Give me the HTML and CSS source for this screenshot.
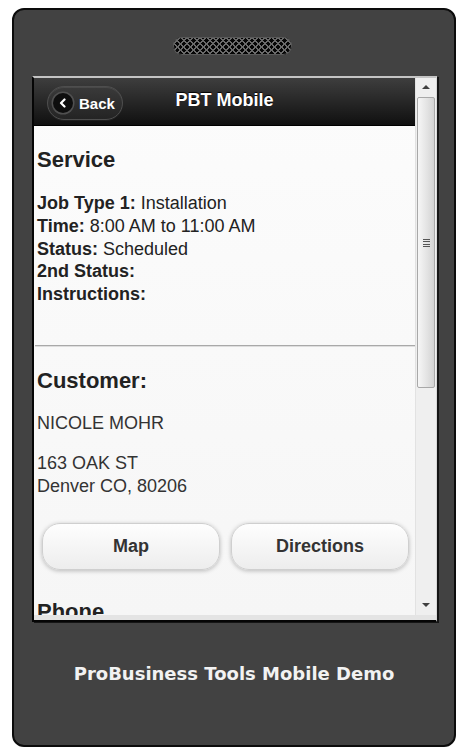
FILE: index.html
```html
<!DOCTYPE html>
<html lang="en">
<head>
    <meta charset="UTF-8">
    <meta name="viewport" content="width=device-width, initial-scale=1.0">
    <title>ProBusiness Tools Mobile Demo</title>
    <link rel="stylesheet" href="styles.css">
</head>
<body>
    <div class="phone">
        <div class="grille"></div>

        <div class="screen">
            <div class="view">
                <div class="header">
                    <a href="#" class="back">
                        <span class="back-icon">
                            <svg width="10" height="10" viewBox="0 0 10 10"><path d="M6.5 1.5 L3 5 L6.5 8.5" fill="none" stroke="#fff" stroke-width="2.2" stroke-linecap="round" stroke-linejoin="round"/></svg>
                        </span>
                        Back
                    </a>
                    <h1>PBT Mobile</h1>
                </div>

                <div class="content">
                    <h3 class="first">Service</h3>
                    <p class="details">
                        <b>Job Type 1:</b> Installation<br>
                        <b>Time:</b> 8:00 AM to 11:00 AM<br>
                        <b>Status:</b> Scheduled<br>
                        <b>2nd Status:</b><br>
                        <b>Instructions:</b>
                    </p>
                    <hr>
                    <h3>Customer:</h3>
                    <p class="name">NICOLE MOHR</p>
                    <p class="address">163 OAK ST<br>Denver CO, 80206</p>
                    <div class="actions">
                        <a href="#" class="btn">Map</a>
                        <a href="#" class="btn">Directions</a>
                    </div>
                    <h3 class="phone-title">Phone</h3>
                </div>
            </div>

            <div class="scrollbar">
                <div class="arrow up"></div>
                <div class="thumb"><span class="grip"></span></div>
                <div class="track"></div>
                <div class="arrow down"></div>
            </div>
        </div>

        <div class="caption">ProBusiness Tools Mobile Demo</div>
    </div>
</body>
</html>
```

FILE: styles.css
```css
body {margin: 0; background: #fff; font-family: "Liberation Sans", Arial, sans-serif;}

.phone {box-sizing: border-box; width: 444px; height: 739px; margin: 8px 0 0 12px; padding-top: 27px; background: #424242; border: 2px solid #0c0c0c; border-radius: 12px;}

.grille {width: 119px; height: 18px; margin-left: 159px; border-radius: 9px; background-color: #050505;
    background-image: repeating-linear-gradient(45deg, transparent 0 3.4px, #6a6a6a 3.4px 4.6px), repeating-linear-gradient(-45deg, transparent 0 3.4px, #6a6a6a 3.4px 4.6px);
    box-shadow: inset 0 0 0 1px #5a5a5a;}

.screen {box-sizing: border-box; display: flex; width: 405px; height: 546px; margin: 21px 0 0 18px; padding-bottom: 5px; background: #e4e4e4; border-top: 2px solid #c4c4c4; border-right: 1px solid #d8d8d8; border-left: 2px solid #050505; border-bottom: 2px solid #050505; box-shadow: 2px 1px 0 #151515;}

.view {flex: 1; overflow: hidden; background: linear-gradient(#fcfcfc, #f6f6f6); color: #222;}

.header {position: relative; height: 48px; background: linear-gradient(#3e3e3e, #101010); border-bottom: 1px solid #000; box-sizing: border-box;}
.header h1 {margin: 0; text-align: center; font-size: 18px; line-height: 44px; color: #fff; text-shadow: 0 -1px 1px #000;}

.back {position: absolute; left: 13px; top: 8px; box-sizing: border-box; width: 76px; height: 34px; display: flex; align-items: center; gap: 6px; padding-left: 5px; border: 1px solid #4e4e4e; border-radius: 17px; background: linear-gradient(#3a3a3a, #242424); box-shadow: inset 0 1px 0 rgba(255,255,255,0.08), 0 1px 0 rgba(255,255,255,0.05); color: #fff; font-size: 15px; font-weight: bold; text-decoration: none;}
.back-icon {display: flex; align-items: center; justify-content: center; width: 20px; height: 20px; border-radius: 50%; background: #0e0e0e; box-shadow: 0 0 0 1.5px #505050;}

.content {padding-left: 3px;}
.content h3 {margin: 21px 0 0; font-size: 22px; line-height: 26px;}
.details {margin: 19px 0 0; font-size: 18px; line-height: 22.75px;}
.content hr {margin: 39px 0 0 -2px; border: 0; border-top: 1px solid #a9a9a9; border-bottom: 1px solid #dedede;}
.name {margin: 18.5px 0 0; font-size: 18px; line-height: 22.75px; color: #333;}
.address {margin: 17.3px 0 0; font-size: 18px; line-height: 22.75px; color: #333;}

.actions {display: grid; grid-template-columns: 1fr 1fr; gap: 11px; margin-top: 25px; padding: 0 6px 0 5px;}
.btn {display: block; height: 47px; box-sizing: border-box; line-height: 45px; text-align: center; border: 1px solid #cfcfcf; border-radius: 18px; background: linear-gradient(#fefefe, #ededed); box-shadow: 0 1px 4px rgba(0,0,0,0.25); color: #333; font-size: 18px; font-weight: bold; text-decoration: none;}

.content h3.phone-title {margin-top: 29px;}

.scrollbar {display: flex; flex-direction: column; width: 20px; background: #efefef; border-left: 1px solid #e2e2e2;}
.arrow {height: 19px; position: relative;}
.arrow::after {content: ""; position: absolute; left: 6px; top: 7px; border-left: 4px solid transparent; border-right: 4px solid transparent;}
.arrow.up::after {border-bottom: 4px solid #404040;}
.arrow.down::after {border-top: 4px solid #404040;}
.thumb {display: flex; align-items: center; justify-content: center; height: 291px; margin: 0 1px; box-sizing: border-box; border: 1px solid #a8a8a8; border-radius: 2px; background: linear-gradient(to right, #f6f6f6, #e2e2e2 60%, #d2d2d2);}
.grip {width: 7px; height: 8px; background: repeating-linear-gradient(#555 0 1px, transparent 1px 2.5px);}
.track {flex: 1;}

.caption {margin-top: 42px; text-align: center; font-family: "DejaVu Sans", Verdana, sans-serif; font-weight: bold; font-size: 18px; line-height: 20px; color: #f2f2f2;}
```
